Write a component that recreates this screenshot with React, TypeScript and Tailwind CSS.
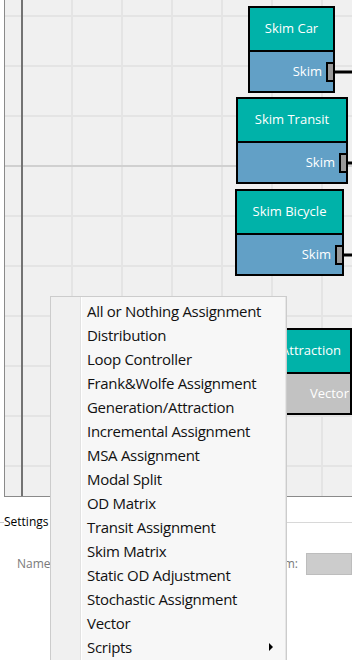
import React from 'react';

const menuItems = [
  'All or Nothing Assignment',
  'Distribution',
  'Loop Controller',
  'Frank&Wolfe Assignment',
  'Generation/Attraction',
  'Incremental Assignment',
  'MSA Assignment',
  'Modal Split',
  'OD Matrix',
  'Transit Assignment',
  'Skim Matrix',
  'Static OD Adjustment',
  'Stochastic Assignment',
  'Vector',
];

interface FlowNodeProps {
  title: string;
  output: string;
  className: string;
  bodyClass: string;
  hasPort?: boolean;
}

function FlowNode({ title, output, className, bodyClass, hasPort = true }: FlowNodeProps) {
  return (
    <div className={`absolute h-[87px] flex flex-col border-2 border-black ${className}`}>
      <div className="h-[42px] shrink-0 bg-[#00b2a9] flex items-center justify-center text-white text-[13px] whitespace-nowrap">
        {title}
      </div>
      <div className={`relative flex-1 border-t-2 border-black flex items-center justify-end text-white text-[13px] ${bodyClass}`}>
        {output}
        {hasPort && (
          <span className="absolute right-[-2px] top-1/2 -translate-y-1/2 w-[9px] h-[20px] bg-[#999999] border-2 border-black" />
        )}
      </div>
    </div>
  );
}

function Grid() {
  const cols = [67, 117, 167, 217, 267, 317];
  const rows = [16, 66, 116, 216, 266, 316, 366, 416, 466];
  return (
    <svg className="absolute left-0 top-0" width="347" height="496">
      {cols.map((x) => (
        <line key={`c${x}`} x1={x} y1={0} x2={x} y2={496} stroke="#e4e4e4" strokeWidth={2} />
      ))}
      {rows.map((y) => (
        <line key={`r${y}`} x1={0} y1={y} x2={347} y2={y} stroke="#e4e4e4" strokeWidth={2} />
      ))}
      <line x1={0} y1={166} x2={347} y2={166} stroke="#d0d0d0" strokeWidth={2} />
      <line x1={17} y1={0} x2={17} y2={496} stroke="#737373" strokeWidth={2} />
      {/* wires leaving the output ports */}
      <line x1={330} y1={72} x2={347} y2={72} stroke="#000" strokeWidth={3} />
      <line x1={343} y1={163} x2={347} y2={163} stroke="#000" strokeWidth={3} />
      <line x1={339} y1={255} x2={347} y2={255} stroke="#000" strokeWidth={3} />
    </svg>
  );
}

function ContextMenu() {
  return (
    <div className="absolute left-[50px] top-[296px] w-[237px] h-[380px] border border-[#cccccc] flex">
      <div className="w-[29px] bg-[#f0f0f0]" />
      <div className="w-px bg-[#e2e2e2]" />
      <div className="w-px bg-white" />
      <div className="flex-1 bg-[#f7f7f7] pt-[2px]">
        {menuItems.map((item) => (
          <div key={item} className="h-[24px] flex items-center pl-[5px] text-[15px] tracking-[-0.3px] text-[#111111] whitespace-nowrap">
            {item}
          </div>
        ))}
        <div className="relative h-[24px] flex items-center pl-[5px] text-[15px] tracking-[-0.3px] text-[#111111]">
          Scripts
          <span className="absolute right-[12px] top-1/2 -translate-y-1/2 w-0 h-0 border-y-[4px] border-y-transparent border-l-[4px] border-l-black" />
        </div>
      </div>
      <div className="w-px bg-[#e6e6e6]" />
    </div>
  );
}

export default function App() {
  return (
    <div className="relative w-[352px] h-[660px] overflow-hidden bg-white font-['Open_Sans',sans-serif]">
      <div className="relative h-[497px] ml-[4px] border-l border-b border-[#8a8a8a] bg-[#f0f0f0] overflow-hidden">
        <Grid />
        <FlowNode title="Skim Car" output="Skim" className="left-[243px] top-[6px] w-[87px]" bodyClass="bg-[#62a0c6] pr-[11px]" />
        <FlowNode title="Skim Transit" output="Skim" className="left-[231px] top-[97px] w-[112px]" bodyClass="bg-[#62a0c6] pr-[11px]" />
        <FlowNode title="Skim Bicycle" output="Skim" className="left-[230px] top-[189px] w-[109px]" bodyClass="bg-[#62a0c6] pr-[11px]" />
        <FlowNode
          title="Generation/Attraction"
          output="Vector"
          className="left-[192px] top-[328px] w-[155px]"
          bodyClass="bg-[#c2c2c2] pr-[1px]"
          hasPort={false}
        />
      </div>

      <div className="mt-[17px] flex items-center h-[16px]">
        <div className="w-[4px] h-px bg-[#c8c8c8]" />
        <span className="text-[12px] text-black leading-[16px]">Settings</span>
        <div className="flex-1 h-px bg-[#d8d8d8] ml-[4px]" />
      </div>

      <div className="mt-[23px] flex items-center h-[22px]">
        <span className="pl-[17px] text-[12px] text-[#7a7a7a]">Name</span>
        <span className="ml-auto text-[12px] text-[#7a7a7a] mr-[8px]">Algorithm:</span>
        <div className="w-[46px] h-[22px] bg-[#cccccc] border border-[#bdbdbd]" />
      </div>

      <ContextMenu />
    </div>
  );
}
